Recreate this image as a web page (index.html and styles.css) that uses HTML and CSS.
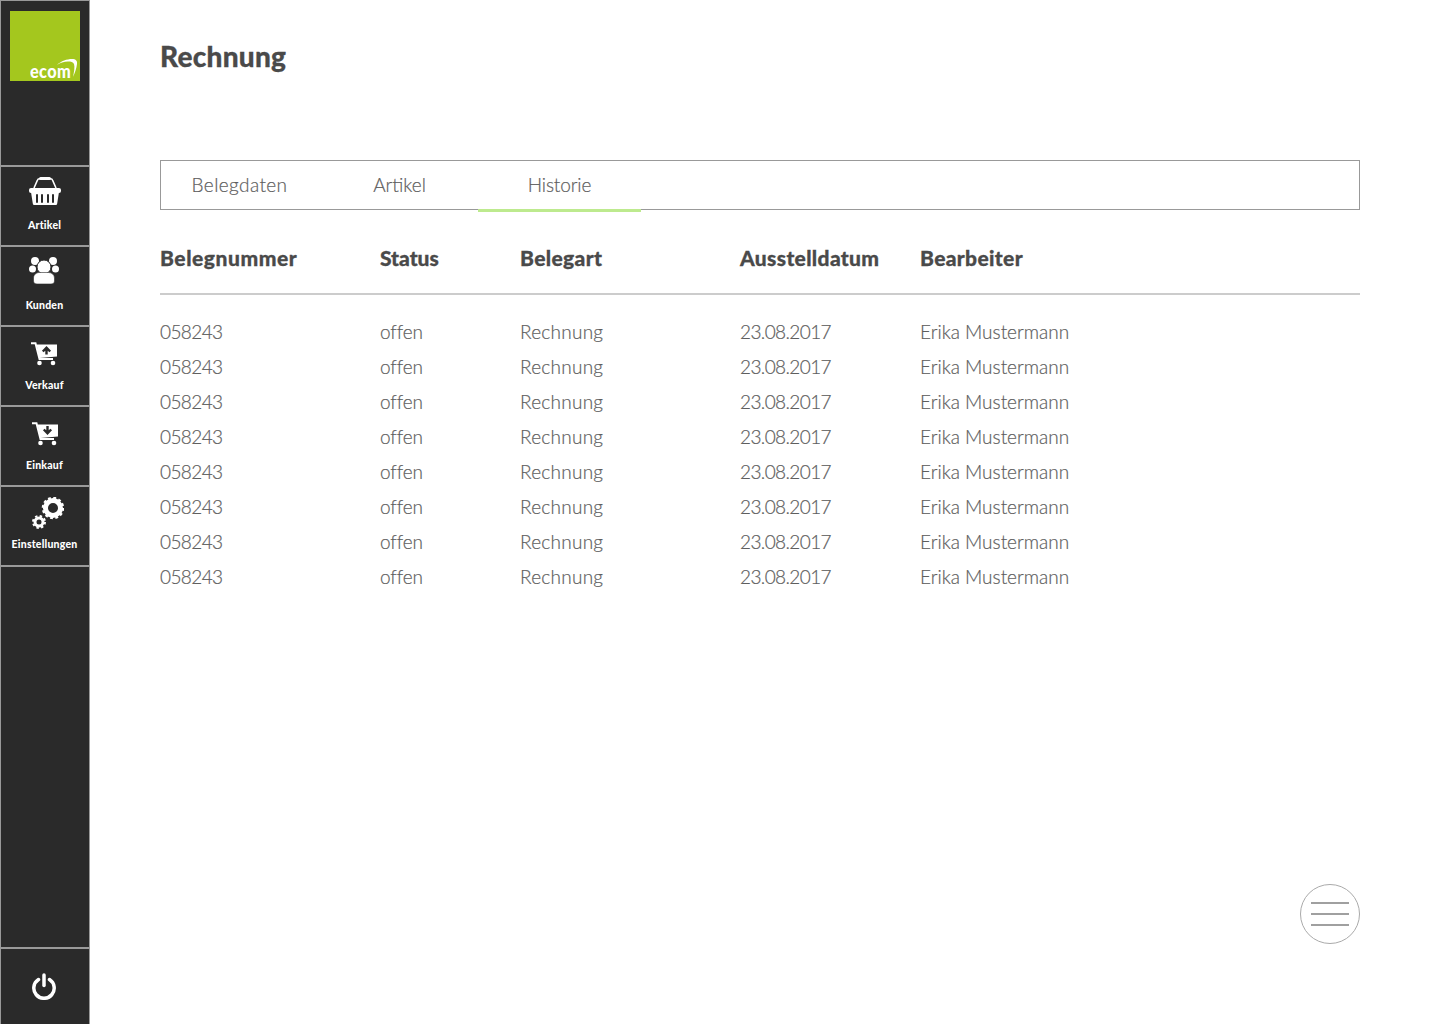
FILE: index.html
```html
<!DOCTYPE html>
<html lang="de">
<head>
<meta charset="utf-8">
<title>Rechnung</title>
<link rel="stylesheet" href="styles.css">
</head>
<body>
<div class="app">
  <aside class="sidebar">
    <div class="brand">
      <div class="logo">
        <span class="logo-text">ecom</span>
        <svg class="logo-swoosh" width="23" height="21" viewBox="0 0 23 21"><path d="M1 7C5 3 11 1 16 1c4 0 5.500 2 5 5-.5 4-2 9-4 13 1-5 2-10 1-13-1-2-3-2.500-6-2.500C8 3.500 4 5 1 7z" fill="#fff"/></svg>
      </div>
    </div>
    <nav class="nav">
      <a class="nav-item">
        <span class="icon-box"><svg class="icon-basket" width="32" height="28" viewBox="0 0 32 28"><path d="M5 11l3.500-8c.3-.8 1-1.200 1.800-1.200h11.400c.8 0 1.500.4 1.800 1.200L27 11" fill="none" stroke="#fff" stroke-width="1.600"/><rect x="10" y="0" width="12" height="3" rx="1.500" fill="#fff"/><rect x="0" y="11" width="32" height="5" rx="2" fill="#fff"/><path d="M2 15h28l-1.800 11.500c-.2 1-.8 1.500-1.700 1.500h-21c-.9 0-1.500-.5-1.700-1.500z" fill="#fff"/><path d="M8 18v7M13 18v7M19 18v7M24 18v7" stroke="#2a2a2a" stroke-width="2" stroke-linecap="round"/></svg></span>
        <span class="nav-label">Artikel</span>
      </a>
      <a class="nav-item">
        <span class="icon-box"><svg class="icon-people" width="30" height="28" viewBox="0 0 30 28"><g fill="#fff"><circle cx="6" cy="4" r="4"/><circle cx="24" cy="4" r="4"/><circle cx="3.500" cy="12" r="3.500"/><circle cx="26.500" cy="12" r="3.500"/><circle cx="15" cy="10" r="7" stroke="#2a2a2a"/><path d="M8 27c-2 0-3.500-1-3.500-3v-3c0-3.500 3-5.500 6-5.500h9c3 0 6 2 6 5.500v3c0 2-1.500 3-3.500 3z" stroke="#2a2a2a" stroke-width=".6"/></g></svg></span>
        <span class="nav-label">Kunden</span>
      </a>
      <a class="nav-item">
        <span class="icon-box"><svg class="icon-cart" width="26" height="24" viewBox="0 0 26 24"><path d="M0 1.200h4.500l4 15.800H22" fill="none" stroke="#fff" stroke-width="2"/><path d="M5.500 2.500H26v12L8.500 16z" fill="#fff"/><circle cx="8.500" cy="21" r="2.300" fill="#fff"/><circle cx="22" cy="21" r="2.300" fill="#fff"/><path d="M15.500 12.500V6M11.800 9.500l3.700-3.700 3.700 3.700" fill="none" stroke="#2a2a2a" stroke-width="2.400"/></svg></span>
        <span class="nav-label">Verkauf</span>
      </a>
      <a class="nav-item">
        <span class="icon-box"><svg class="icon-cart-in" width="26" height="24" viewBox="0 0 26 24"><path d="M0 1.200h4.500l4 15.800H22" fill="none" stroke="#fff" stroke-width="2"/><path d="M5.500 2.500H26v12L8.500 16z" fill="#fff"/><circle cx="8.500" cy="21" r="2.300" fill="#fff"/><circle cx="22" cy="21" r="2.300" fill="#fff"/><path d="M15.500 4v7M11.800 7.500l3.700 3.700 3.700-3.700" fill="none" stroke="#2a2a2a" stroke-width="2.400"/></svg></span>
        <span class="nav-label">Einkauf</span>
      </a>
      <a class="nav-item nav-item-last">
        <span class="icon-box"><svg class="icon-gears" width="32" height="32" viewBox="0 0 32 32">
          <circle cx="21" cy="11" r="7.500" fill="none" stroke="#fff" stroke-width="5"/>
          <circle cx="21" cy="11" r="10" fill="none" stroke="#fff" stroke-width="2.500" stroke-dasharray="2.800 2.430"/>
          <circle cx="7" cy="25" r="4" fill="none" stroke="#fff" stroke-width="3"/>
          <circle cx="7" cy="25" r="6" fill="none" stroke="#fff" stroke-width="2" stroke-dasharray="2.400 2.310"/>
        </svg></span>
        <span class="nav-label">Einstellungen</span>
      </a>
    </nav>
    <a class="power">
      <svg width="24" height="27" viewBox="0 0 24 27"><path d="M6.500 6.500a10.200 10.200 0 1 0 11 0" fill="none" stroke="#fff" stroke-width="3.500" stroke-linecap="round"/><path d="M12 2v10.500" stroke="#fff" stroke-width="3.500" stroke-linecap="round"/></svg>
    </a>
  </aside>
  <main class="content">
    <h1 class="title">Rechnung</h1>
    <div class="tabs">
      <span class="tab tab-first">Belegdaten</span>
      <span class="tab tab-second">Artikel</span>
      <span class="tab tab-active">Historie</span>
    </div>
    <div class="row head">
      <span class="head-first">Belegnummer</span><span class="head-status">Status</span><span>Belegart</span><span>Ausstelldatum</span><span>Bearbeiter</span>
    </div>
    <div class="rows">
      <div class="row"><span class="num">058243</span><span class="state">offen</span><span class="kind">Rechnung</span><span class="num">23.08.2017</span><span>Erika Mustermann</span></div>
      <div class="row"><span class="num">058243</span><span class="state">offen</span><span class="kind">Rechnung</span><span class="num">23.08.2017</span><span>Erika Mustermann</span></div>
      <div class="row"><span class="num">058243</span><span class="state">offen</span><span class="kind">Rechnung</span><span class="num">23.08.2017</span><span>Erika Mustermann</span></div>
      <div class="row"><span class="num">058243</span><span class="state">offen</span><span class="kind">Rechnung</span><span class="num">23.08.2017</span><span>Erika Mustermann</span></div>
      <div class="row"><span class="num">058243</span><span class="state">offen</span><span class="kind">Rechnung</span><span class="num">23.08.2017</span><span>Erika Mustermann</span></div>
      <div class="row"><span class="num">058243</span><span class="state">offen</span><span class="kind">Rechnung</span><span class="num">23.08.2017</span><span>Erika Mustermann</span></div>
      <div class="row"><span class="num">058243</span><span class="state">offen</span><span class="kind">Rechnung</span><span class="num">23.08.2017</span><span>Erika Mustermann</span></div>
      <div class="row"><span class="num">058243</span><span class="state">offen</span><span class="kind">Rechnung</span><span class="num">23.08.2017</span><span>Erika Mustermann</span></div>
    </div>
    <button class="fab" aria-label="Menü"><i></i><i></i><i></i></button>
  </main>
</div>
</body>
</html>
```
FILE: styles.css
```css
* { box-sizing: border-box; }
html, body { margin: 0; height: 100%; }
body { font-family: Lato, "Open Sans", sans-serif; color: #666; background: #fff; }
.app { display: flex; width: 1440px; height: 1024px; overflow: hidden; }

.sidebar {
  width: 90px; flex: none; display: flex; flex-direction: column;
  background: #2a2a2a; border: 1px solid #999; border-bottom: 0;
}
.brand { height: 164px; flex: none; padding: 10px 9px; }
.logo { width: 70px; height: 70px; background: #a4c71e; position: relative; overflow: hidden; }
.logo-text {
  position: absolute; left: 20px; top: 50px;
  font: 900 19px/20px Lato, sans-serif; color: #fff; letter-spacing: .4px;
  transform: scaleX(.86); transform-origin: left center;
}
.logo-swoosh { position: absolute; left: 46px; top: 47px; }

.nav { flex: 1; display: flex; flex-direction: column; }
.nav-item {
  height: 80px; flex: none; border-top: 2px solid #999;
  display: flex; flex-direction: column; align-items: center;
  color: #fff;
}
.nav-item-last { border-bottom: 2px solid #999; height: 82px; }
.icon-box { height: 51px; display: block; }
.icon-box svg { display: block; }
.icon-basket { margin-top: 10px; }
.icon-people { margin-top: 10px; margin-right: 2px; }
.icon-cart { margin-top: 15px; margin-right: 2px; }
.icon-cart-in { margin-top: 15px; }
.icon-gears { margin-top: 10px; margin-left: 6px; }
.nav-label { font-size: 10.500px; line-height: 14px; font-weight: 900; letter-spacing: .2px; white-space: nowrap; margin-right: 1px; }
.nav-item-last .nav-label { margin-top: -1px; }

.power {
  height: 77px; flex: none; border-top: 2px solid #999;
  display: flex; align-items: center; justify-content: center; padding-right: 2px;
}

.content { flex: 1; padding: 0 80px 0 70px; position: relative; }
.title { margin: 0; padding-top: 39px; height: 160px; font-size: 28px; line-height: 34px; font-weight: 900; letter-spacing: .25px; color: #4a4a4a; -webkit-text-stroke: .3px #4a4a4a; }
.tabs { height: 50px; border: 1px solid #999; display: flex; align-items: flex-start; font-size: 19px; font-weight: 300; color: #5e5e5e; -webkit-text-stroke: .2px #5e5e5e; }
.tab { display: flex; align-items: center; justify-content: center; height: 48px; padding-bottom: 2px; }
.tab-first { width: 157px; letter-spacing: .4px; }
.tab-second { width: 160px; padding-left: 3px; }
.tab-active { width: 163px; height: 51px; padding-bottom: 2px; border-bottom: 3px solid #bdea8e; letter-spacing: -.1px; }

.row { display: grid; grid-template-columns: 220px 140px 220px 180px 1fr; font-size: 19px; line-height: 35px; font-weight: 300; color: #5e5e5e; -webkit-text-stroke: .2px #5e5e5e; }
.head { height: 85px; padding-top: 30px; border-bottom: 2px solid #ccc; font-size: 21px; font-weight: 900; letter-spacing: .35px; color: #4a4a4a; -webkit-text-stroke: .3px #4a4a4a; }
.head-first { letter-spacing: .55px; }
.head-status { letter-spacing: 0; }
.rows { padding-top: 19px; }
.num { letter-spacing: -.6px; }
.state { letter-spacing: -.1px; }
.kind { letter-spacing: .25px; }

.fab {
  position: absolute; right: 80px; top: 884px; width: 60px; height: 60px; border-radius: 50%;
  border: 1px solid #aaa; background: #fff; padding: 0;
  display: flex; flex-direction: column; align-items: center; justify-content: center; gap: 9px;
}
.fab i { display: block; width: 38px; height: 2px; background: #a0a0a0; }
```
